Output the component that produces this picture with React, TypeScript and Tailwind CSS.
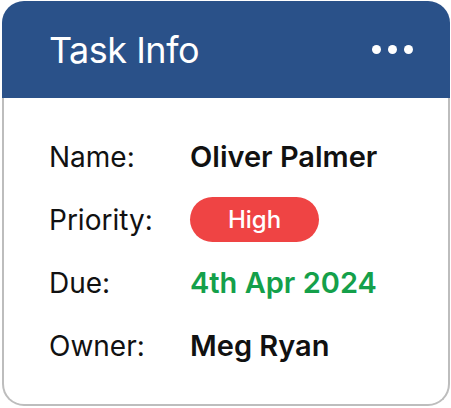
export default function App() {
  const rows = [
    { label: "Name:", value: <span className="text-[29px] font-semibold text-[#111]">Oliver Palmer</span> },
    {
      label: "Priority:",
      value: (
        <span className="flex h-[45px] w-[129px] items-center justify-center rounded-full bg-[#ef4444] text-[24px] font-medium text-white">
          High
        </span>
      ),
    },
    { label: "Due:", value: <span className="text-[29px] font-semibold text-[#14a04a]">4th Apr 2024</span> },
    { label: "Owner:", value: <span className="text-[29px] font-semibold text-[#111]">Meg Ryan</span> },
  ];

  return (
    <div className="min-h-screen bg-white pl-[2px] pt-[1px]" style={{ fontFamily: "Inter, 'Noto Sans', sans-serif" }}>
      <div className="w-[448px]">
        <div className="flex h-[97px] items-center justify-between rounded-t-[22px] bg-[#2a5189] pl-[47px] pr-[37px]">
          <h1 className="text-[36px] font-normal leading-none tracking-[-0.5px] text-white">Task Info</h1>
          <div className="flex items-center gap-[7px]">
            <span className="h-[9px] w-[9px] rounded-full bg-white" />
            <span className="h-[9px] w-[9px] rounded-full bg-white" />
            <span className="h-[9px] w-[9px] rounded-full bg-white" />
          </div>
        </div>
        <div className="h-[308px] rounded-b-[22px] border-2 border-t-0 border-[#bdbdbd] pl-[45px] pt-[27px]">
          {rows.map((r) => (
            <div key={r.label} className="grid h-[63px] grid-cols-[141px_1fr] items-center text-[28px] leading-none text-[#111]">
              <span>{r.label}</span>
              <div className="flex">{r.value}</div>
            </div>
          ))}
        </div>
      </div>
    </div>
  );
}
